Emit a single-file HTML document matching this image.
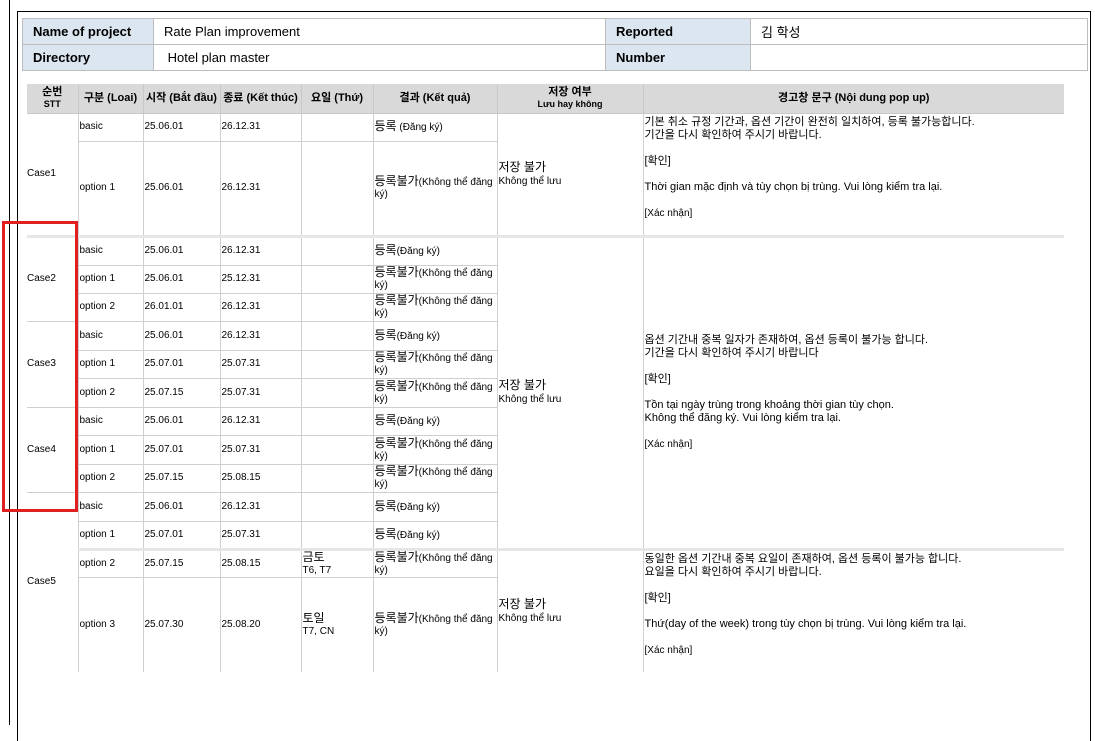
<!DOCTYPE html>
<html><head><meta charset="utf-8"><style>
*{margin:0;padding:0;box-sizing:border-box}
body{width:1095px;height:725px;background:#fff;position:relative;overflow:hidden;font-family:"Liberation Sans","Noto Sans CJK KR",sans-serif;color:#000}
.vl{position:absolute;top:0;bottom:0;width:1px;background:#000}
.frame{position:absolute;left:17px;top:11px;width:1074px;height:730px;border:1px solid #000;border-bottom:none}
table{border-collapse:collapse;table-layout:fixed;position:absolute}
.ht{left:22px;top:18px;width:1066px;font-size:13px}
.ht td{height:26px;border:1px solid #bdbdbd;padding:0 10px}
.ht .l{background:#dce6f1;font-weight:bold}
.mt{left:27px;top:84px;width:1037px;font-size:10px;line-height:12px}
.mt th{background:#d9d9d9;font-weight:bold;font-size:11px;height:29px;border-left:1px solid #c8c8c8;border-bottom:1px solid #c8c8c8;line-height:12px}
.mt th small{font-size:9px;display:block}
.mt td{border:1px solid #cfcfcf;padding:0 1px;vertical-align:middle}
.mt td.c{border-left:none;padding-left:0}
.mt tr.g td{border-top:3px solid #e6e6e6}
.mt tr.last td{border-bottom:none}
.mt td.s{font-size:12px;line-height:13px}
.mt td.s small{font-size:10px}
.mt td.w{font-size:11px;line-height:13px;border-right:none}
.k{font-size:12px}
.red{position:absolute;left:2px;top:221px;width:76px;height:291px;border:3px solid #e02020}
</style></head><body>
<div class="vl" style="left:9px"></div>
<div class="frame"></div>
<table class="ht">
<colgroup><col style="width:131px"><col style="width:452px"><col style="width:145px"><col></colgroup>
<tr><td class="l">Name of project</td><td>Rate Plan improvement</td><td class="l">Reported</td><td>김 학성</td></tr>
<tr><td class="l">Directory</td><td>&nbsp;Hotel plan master</td><td class="l">Number</td><td></td></tr>
</table>
<table class="mt">
<colgroup><col style="width:51px"><col style="width:65px"><col style="width:77px"><col style="width:81px"><col style="width:72px"><col style="width:124px"><col style="width:146px"><col></colgroup>
<tr><th style="border-left:none">순번<small>STT</small></th><th>구분 (Loai)</th><th>시작 (Bắt đầu)</th><th>종료 (Kết thúc)</th><th>요일 (Thứ)</th><th>결과 (Kết quả)</th><th>저장 여부<small>Lưu hay không</small></th><th>경고창 문구 (Nội dung pop up)</th></tr>
<tr style="height:28px"><td class="c" rowspan="2">Case1</td><td>basic</td><td>25.06.01</td><td>26.12.31</td><td></td><td><span class="k">등록</span> (Đăng ký)</td><td class="s" rowspan="2">저장 불가<br><small>Không thể lưu</small></td><td class="w" rowspan="2" style="vertical-align:top;padding-top:2px">기본 취소 규정 기간과, 옵션 기간이 완전히 일치하여, 등록 불가능합니다.<br>기간을 다시 확인하여 주시기 바랍니다.<br><br>[확인]<br><br>Thời gian mặc định và tùy chọn bị trùng. Vui lòng kiểm tra lại.<br><br><span style="font-size:10px">[Xác nhận]</span></td></tr>
<tr style="height:95px"><td>option 1</td><td>25.06.01</td><td>26.12.31</td><td></td><td><span class="k">등록불가</span>(Không thể đăng ký)</td></tr>
<tr class="g" style="height:29px"><td class="c" rowspan="3">Case2</td><td>basic</td><td>25.06.01</td><td>26.12.31</td><td></td><td><span class="k">등록</span>(Đăng ký)</td><td class="s" rowspan="11">저장 불가<br><small>Không thể lưu</small></td><td class="w" rowspan="11">옵션 기간내 중복 일자가 존재하여, 옵션 등록이 불가능 합니다.<br>기간을 다시 확인하여 주시기 바랍니다<br><br>[확인]<br><br>Tồn tại ngày trùng trong khoảng thời gian tùy chọn.<br>Không thể đăng ký. Vui lòng kiểm tra lại.<br><br><span style="font-size:10px">[Xác nhận]</span></td></tr>
<tr style="height:28px"><td>option 1</td><td>25.06.01</td><td>25.12.31</td><td></td><td><span class="k">등록불가</span>(Không thể đăng ký)</td></tr>
<tr style="height:28px"><td>option 2</td><td>26.01.01</td><td>26.12.31</td><td></td><td><span class="k">등록불가</span>(Không thể đăng ký)</td></tr>
<tr style="height:29px"><td class="c" rowspan="3">Case3</td><td>basic</td><td>25.06.01</td><td>26.12.31</td><td></td><td><span class="k">등록</span>(Đăng ký)</td></tr>
<tr style="height:28px"><td>option 1</td><td>25.07.01</td><td>25.07.31</td><td></td><td><span class="k">등록불가</span>(Không thể đăng ký)</td></tr>
<tr style="height:29px"><td>option 2</td><td>25.07.15</td><td>25.07.31</td><td></td><td><span class="k">등록불가</span>(Không thể đăng ký)</td></tr>
<tr style="height:28px"><td class="c" rowspan="3">Case4</td><td>basic</td><td>25.06.01</td><td>26.12.31</td><td></td><td><span class="k">등록</span>(Đăng ký)</td></tr>
<tr style="height:29px"><td>option 1</td><td>25.07.01</td><td>25.07.31</td><td></td><td><span class="k">등록불가</span>(Không thể đăng ký)</td></tr>
<tr style="height:28px"><td>option 2</td><td>25.07.15</td><td>25.08.15</td><td></td><td><span class="k">등록불가</span>(Không thể đăng ký)</td></tr>
<tr style="height:29px"><td class="c" rowspan="4" style="border-bottom:none">Case5</td><td>basic</td><td>25.06.01</td><td>26.12.31</td><td></td><td><span class="k">등록</span>(Đăng ký)</td></tr>
<tr style="height:28px"><td>option 1</td><td>25.07.01</td><td>25.07.31</td><td></td><td><span class="k">등록</span>(Đăng ký)</td></tr>
<tr class="g" style="height:28px"><td>option 2</td><td>25.07.15</td><td>25.08.15</td><td><span class="k">금토</span><br>T6, T7</td><td><span class="k">등록불가</span>(Không thể đăng ký)</td><td class="s" rowspan="2" style="border-bottom:none">저장 불가<br><small>Không thể lưu</small></td><td class="w" rowspan="2" style="vertical-align:top;padding-top:2px;border-bottom:none">동일한 옵션 기간내 중복 요일이 존재하여, 옵션 등록이 불가능 합니다.<br>요일을 다시 확인하여 주시기 바랍니다.<br><br>[확인]<br><br>Thứ(day of the week) trong tùy chọn bị trùng. Vui lòng kiểm tra lại.<br><br><span style="font-size:10px">[Xác nhận]</span></td></tr>
<tr class="last" style="height:95px"><td>option 3</td><td>25.07.30</td><td>25.08.20</td><td><span class="k">토일</span><br>T7, CN</td><td><span class="k">등록불가</span>(Không thể đăng ký)</td></tr>
</table>
<div class="red"></div>
</body></html>
